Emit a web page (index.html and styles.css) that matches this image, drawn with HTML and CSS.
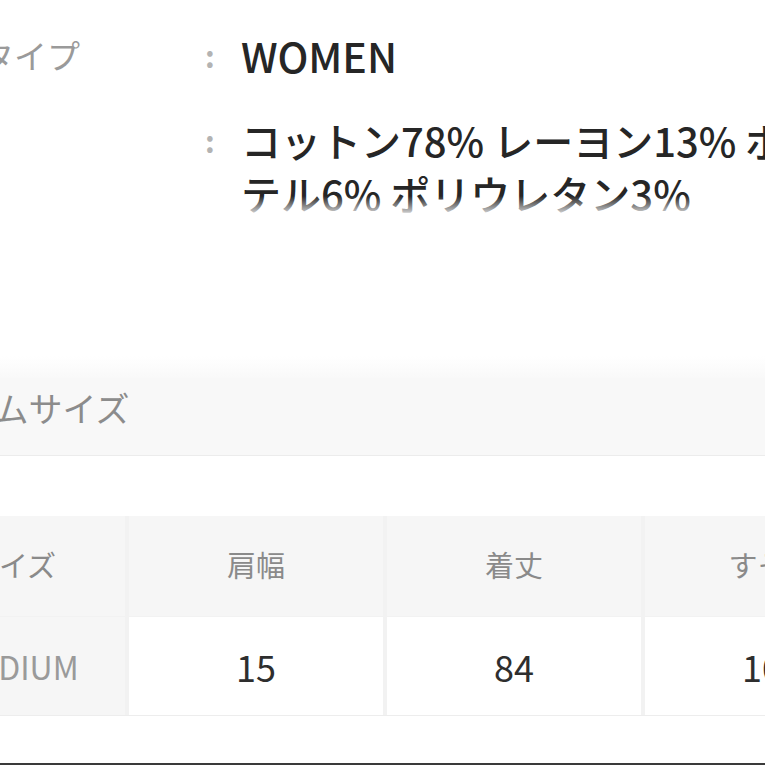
FILE: index.html
```
<!DOCTYPE html>
<html lang="ja">
<head>
<meta charset="utf-8">
<link rel="stylesheet" href="styles.css">
</head>
<body>
<div class="page">
  <div class="spec">
    <div class="spec-row row-type">
      <div class="spec-label">タイプ</div>
      <div class="spec-colon">:</div>
      <div class="spec-value">WOMEN</div>
    </div>
    <div class="spec-row row-material">
      <div class="spec-label"></div>
      <div class="spec-colon">:</div>
      <div class="spec-value fade">コットン78% レーヨン13% ポリエス<br>テル6% ポリウレタン3%</div>
    </div>
  </div>

  <div class="size-section">
    <div class="size-bar"><span class="size-title">アイテムサイズ</span></div>
  </div>

  <div class="size-table">
    <div class="cell head first">サイズ</div>
    <div class="cell head">肩幅</div>
    <div class="cell head">着丈</div>
    <div class="cell head">すそ幅</div>
    <div class="cell rowname first">MEDIUM</div>
    <div class="cell val">15</div>
    <div class="cell val">84</div>
    <div class="cell val">106</div>
  </div>

  <div class="bottom-line"></div>
</div>
</body>
</html>
```
FILE: styles.css
```
html, body {
  margin: 0;
  padding: 0;
  background: #fff;
}
body {
  width: 765px;
  height: 765px;
  overflow: hidden;
  font-family: "Noto Sans CJK JP", "Noto Sans", sans-serif;
}
.page {
  width: 765px;
  height: 765px;
  display: flex;
  flex-direction: column;
  overflow: hidden;
}
.spec {
  padding-top: 29px;
  margin-left: -19px;
  display: flex;
  flex-direction: column;
  gap: 33px;
}
.spec-row {
  display: grid;
  grid-template-columns: 222px 38px auto;
  white-space: nowrap;
}
.spec-label {
  font-size: 33px;
  line-height: 52px;
  color: #9a9a9a;
}
.spec-colon {
  font-size: 30px;
  font-weight: 700;
  line-height: 52px;
  color: #b3b3b3;
  padding-left: 2px;
}
.spec-value {
  font-size: 41px;
  font-weight: 500;
  line-height: 52px;
  color: #262626;
}
.row-material .spec-value {
  font-size: 40px;
  line-height: 53px;
}
.row-material .spec-label,
.row-material .spec-colon {
  line-height: 53px;
}
.fade {
  position: relative;
}
.fade::after {
  content: "";
  position: absolute;
  left: -20px;
  right: 0;
  bottom: -6px;
  height: 30px;
  background: linear-gradient(rgba(255,255,255,0), rgba(255,255,255,0.95) 70%);
}
.size-section {
  margin-top: 136px;
  padding-top: 22px;
  background: linear-gradient(#ffffff, #f9f9f9 22px);
}
.size-bar {
  height: 78px;
  box-sizing: border-box;
  background: #f8f8f8;
  border-bottom: 1px solid #ececec;
  line-height: 60px;
}
.size-title {
  display: inline-block;
  margin-left: -104px;
  font-size: 34px;
  color: #8c8c8c;
  white-space: nowrap;
}
.size-table {
  margin-top: 60px;
  margin-left: -99px;
  width: 1020px;
  display: grid;
  grid-template-columns: 224px 254px 254px 254px;
  grid-template-rows: 100px 98px;
  column-gap: 4px;
  row-gap: 1px;
  background: #f2f2f2;
  border-bottom: 1px solid #ededed;
}
.cell {
  display: flex;
  align-items: center;
  justify-content: center;
  white-space: nowrap;
}
.head {
  background: #f6f6f6;
  font-size: 29px;
  color: #8a8a8a;
  padding-bottom: 5px;
  box-sizing: border-box;
}
.rowname {
  background: #f6f6f6;
  font-size: 32px;
  color: #9a9a9a;
  padding-left: 6px;
  box-sizing: border-box;
}
.val {
  background: #fff;
  font-size: 36px;
  color: #2e2e2e;
}
.bottom-line {
  margin-top: auto;
  height: 2px;
  background: #3a3a3a;
}
```
